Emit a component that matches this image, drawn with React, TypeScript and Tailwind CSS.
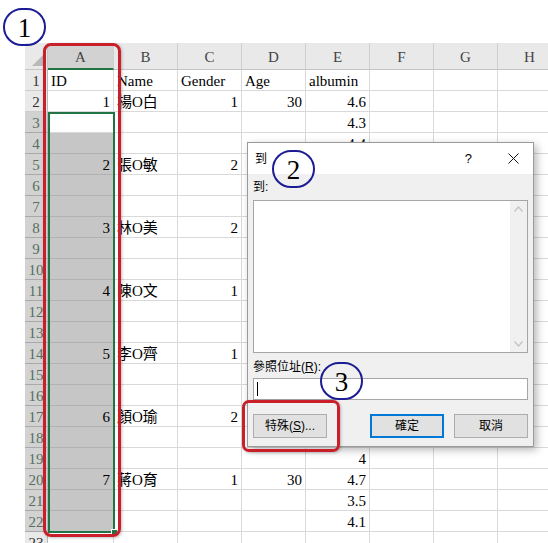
import React from "react";

type RowData = { a?: string; b?: string; c?: string; d?: string; e?: string };

const rows: RowData[] = [
  { a: "ID", b: "Name", c: "Gender", d: "Age", e: "albumin" },
  { a: "1", b: "楊O白", c: "1", d: "30", e: "4.6" },
  { e: "4.3" },
  { e: "4.4" },
  { a: "2", b: "張O敏", c: "2", d: "45", e: "4.2" },
  { e: "4.0" },
  { e: "3.9" },
  { a: "3", b: "林O美", c: "2", d: "52", e: "4.5" },
  { e: "4.1" },
  { e: "4.3" },
  { a: "4", b: "陳O文", c: "1", d: "61", e: "3.8" },
  { e: "4.0" },
  { e: "4.2" },
  { a: "5", b: "李O齊", c: "1", d: "38", e: "4.4" },
  { e: "4.6" },
  { e: "4.5" },
  { a: "6", b: "顏O瑜", c: "2", d: "27", e: "4.1" },
  { e: "3.7" },
  { e: "4" },
  { a: "7", b: "蔣O育", c: "1", d: "30", e: "4.7" },
  { e: "3.5" },
  { e: "4.1" },
  {},
];

const letters = ["A", "B", "C", "D", "E", "F", "G", "H"];

const serif = { fontFamily: '"Liberation Serif", "Noto Sans CJK TC", serif' };
const ui = { fontFamily: '"Liberation Sans", "Noto Sans CJK TC", sans-serif' };

function Cell({
  value,
  wide,
  left,
  selected,
  active,
}: {
  value?: string;
  wide?: boolean;
  left?: boolean;
  selected?: boolean;
  active?: boolean;
}) {
  const bg = selected && !active ? "bg-[#c6c6c6] border-b-[#b2b2b2]" : "bg-white border-b-[#d9d9d9]";
  return (
    <div
      className={`${wide ? "w-[66px]" : "w-[64px]"} shrink-0 h-full flex items-center ${
        left ? "justify-start" : "justify-end"
      } px-[3px] pt-[2px] border-r border-b border-r-[#d9d9d9] ${bg} whitespace-nowrap text-[15px] text-black`}
    >
      {value}
    </div>
  );
}

function SheetRow({ n, data }: { n: number; data: RowData }) {
  const sel = n >= 3 && n <= 22;
  const isNum = (v?: string) => v !== undefined && /^[0-9.]+$/.test(v);
  return (
    <div className="flex h-[21px]">
      <div
        className={`w-[23px] shrink-0 h-full flex items-center justify-center pt-[2px] border-r border-b border-r-[#b8b8b8] text-[15px] ${
          sel ? "bg-[#d2d2d2] text-[#55705e] border-b-[#a9a9a9]" : "bg-[#e9e9e9] text-[#333] border-b-[#cdcdcd]"
        }`}
      >
        {n}
      </div>
      <Cell value={data.a} wide left={!isNum(data.a)} selected={sel} active={n === 3} />
      <Cell value={data.b} left={!isNum(data.b)} />
      <Cell value={data.c} left={!isNum(data.c)} />
      <Cell value={data.d} left={!isNum(data.d)} />
      <Cell value={data.e} left={!isNum(data.e)} />
      <Cell />
      <Cell />
      <Cell />
    </div>
  );
}

function Sheet() {
  return (
    <div className="pt-[43px] pl-[25px]" style={serif}>
      <div className="flex h-[27px]">
        <div className="w-[23px] shrink-0 h-full bg-[#e9e9e9] border-r border-b border-[#c4c4c4] flex items-end justify-end p-[3px]">
          <svg width="12" height="12" viewBox="0 0 12 12">
            <polygon points="12,0 12,12 0,12" fill="#b9b9b9" />
          </svg>
        </div>
        {letters.map((l, i) => (
          <div
            key={l}
            className={`${i === 0 ? "w-[66px] bg-[#d2d2d2] border-b-2 border-b-[#217346]" : "w-[64px] bg-[#e9e9e9] border-b border-b-[#c4c4c4]"} shrink-0 h-full flex items-center justify-center pt-[3px] border-r border-r-[#cfcfcf] text-[15px] text-[#444]`}
          >
            {l}
          </div>
        ))}
      </div>
      {rows.map((r, i) => (
        <SheetRow key={i} n={i + 1} data={r} />
      ))}
    </div>
  );
}

function Button({ label, primary }: { label: React.ReactNode; primary?: boolean }) {
  return (
    <button
      className={`w-[74px] h-[24px] flex items-center justify-center bg-[#e1e1e1] text-[12px] text-black ${
        primary ? "border-2 border-[#0078d7]" : "border border-[#adadad]"
      }`}
    >
      {label}
    </button>
  );
}

function GotoDialog() {
  return (
    <div
      className="absolute left-[247px] top-[142px] w-[287px] h-[305px] flex flex-col bg-[#f0f0f0] border border-[#9a9a9a] shadow-[3px_3px_8px_rgba(0,0,0,0.28)]"
      style={ui}
    >
      <div className="h-[31px] shrink-0 bg-white flex items-center pl-[7px] pr-[14px] text-[12px] text-black">
        <span>到</span>
        <span className="ml-auto mr-[36px] text-[13px]">?</span>
        <svg width="11" height="11" viewBox="0 0 11 11">
          <path d="M0.5 0.5 L10.5 10.5 M10.5 0.5 L0.5 10.5" stroke="#111" strokeWidth="1" />
        </svg>
      </div>
      <div className="flex-1 flex flex-col px-[5px] pt-[6px] pb-[8px] text-[12px] text-black">
        <div className="h-[14px] leading-[14px]">到:</div>
        <div className="mt-[6px] h-[153px] bg-white border border-[#a6a6a6] flex justify-end">
          <div className="w-[17px] h-full bg-[#f0f0f0] flex flex-col items-center justify-between py-[5px]">
            <svg width="9" height="6" viewBox="0 0 9 6">
              <polyline points="0.5,5.5 4.5,1 8.5,5.5" fill="none" stroke="#c2c2c2" strokeWidth="1.2" />
            </svg>
            <svg width="9" height="6" viewBox="0 0 9 6">
              <polyline points="0.5,0.5 4.5,5 8.5,0.5" fill="none" stroke="#c2c2c2" strokeWidth="1.2" />
            </svg>
          </div>
        </div>
        <div className="mt-[7px] h-[14px] leading-[14px]">
          參照位址(<span className="underline">R</span>):
        </div>
        <div className="mt-[4px] h-[22px] bg-white border border-[#a6a6a6] flex items-center pl-[3px]">
          <div className="w-px h-[14px] bg-black" />
        </div>
        <div className="mt-[14px] flex items-center justify-between">
          <Button
            label={
              <span>
                特殊(<span className="underline">S</span>)...
              </span>
            }
          />
          <div className="flex gap-[10px]">
            <Button label="確定" primary />
            <Button label="取消" />
          </div>
        </div>
      </div>
    </div>
  );
}

function Marker({ n, className }: { n: string; className: string }) {
  return (
    <div
      className={`absolute w-[43px] h-[38px] rounded-full border-[2.5px] border-[#1c1c94] flex items-center justify-center text-[27px] leading-none text-black ${className}`}
      style={serif}
    >
      <span className="mt-[2px]">{n}</span>
    </div>
  );
}

export default function App() {
  return (
    <div className="relative w-[548px] h-[543px] overflow-hidden bg-white">
      <Sheet />
      {/* selection outline A3:A22 */}
      <div className="absolute left-[48px] top-[112px] w-[67px] h-[421px] border-2 border-[#217346]" />
      <div className="absolute left-[111px] top-[529px] w-[7px] h-[7px] bg-[#217346] border border-white" />
      <GotoDialog />
      {/* annotations */}
      <div className="absolute left-[43px] top-[43px] w-[78px] h-[494px] rounded-[8px] border-[3px] border-[#c81f2b] shadow-[1px_1px_3px_rgba(0,0,0,0.25)]" />
      <div className="absolute left-[242px] top-[400px] w-[98px] h-[52px] rounded-[7px] border-[3px] border-[#c81f2b] shadow-[1px_1px_3px_rgba(0,0,0,0.25)]" />
      <Marker n="1" className="left-[3px] top-[8px]" />
      <Marker n="2" className="left-[272px] top-[150px]" />
      <Marker n="3" className="left-[320px] top-[362px]" />
    </div>
  );
}
